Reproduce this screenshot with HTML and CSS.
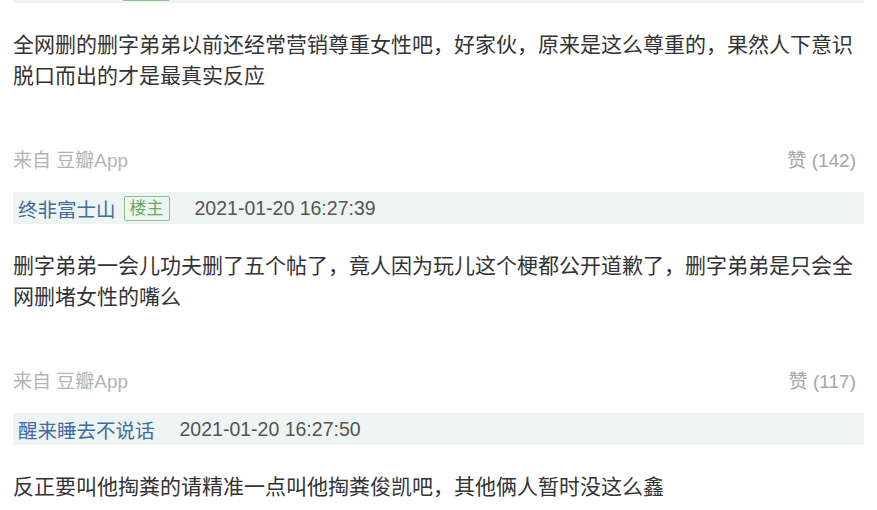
FILE: index.html
```html
<!DOCTYPE html>
<html lang="zh-CN">
<head>
    <meta charset="UTF-8">
    <meta name="viewport" content="width=device-width, initial-scale=1.0">
    <title>豆瓣回复</title>
    <link rel="stylesheet" href="styles.css">
</head>
<body>

    <div class="reply-list">
        <!-- cola del encabezado anterior, cortado por arriba -->
        <div class="reply-head reply-head-cut">
            <span class="tag-edge"></span>
        </div>
        <p class="reply-content">全网删的删字弟弟以前还经常营销尊重女性吧，好家伙，原来是这么尊重的，果然人下意识脱口而出的才是最真实反应</p>
        <div class="reply-foot">
            <span class="source">来自 豆瓣App</span>
            <span class="likes">赞 (142)</span>
        </div>

        <div class="reply-head">
            <span class="author">终非富士山</span>
            <span class="op-tag">楼主</span>
            <span class="pubtime">2021-01-20 16:27:39</span>
        </div>
        <p class="reply-content">删字弟弟一会儿功夫删了五个帖了，竟人因为玩儿这个梗都公开道歉了，删字弟弟是只会全网删堵女性的嘴么</p>
        <div class="reply-foot">
            <span class="source">来自 豆瓣App</span>
            <span class="likes">赞 (117)</span>
        </div>

        <div class="reply-head">
            <span class="author">醒来睡去不说话</span>
            <span class="pubtime">2021-01-20 16:27:50</span>
        </div>
        <p class="reply-content">反正要叫他掏粪的请精准一点叫他掏粪俊凯吧，其他俩人暂时没这么鑫</p>
    </div>

</body>
</html>
```

FILE: styles.css
```css
body {
    margin: 0;
    background-color: #ffffff;
    color: #333;
    font-family: "Liberation Sans", "Noto Sans CJK SC", sans-serif;
    overflow: hidden;
}
.reply-list {
    padding: 0 13px;
}
.reply-head {
    display: flex;
    align-items: center;
    height: 32px;
    padding: 0 5px;
    margin-top: 19px;
    background-color: #eef4f1; /* verde grisaceo */
}
.reply-head-cut {
    margin-top: -29px;
    align-items: flex-start;
}
.tag-edge {
    margin-left: 104px;
    margin-top: 6px;
    width: 46px;
    height: 22px;
    border: 1px solid #8cc08c;
    border-radius: 2px;
}
.author {
    font-size: 19.5px;
    color: #3f6b9e; /* azul */
}
.op-tag {
    margin-left: 8px;
    height: 23px;
    line-height: 23px;
    padding: 0 5px;
    border: 1px solid #8cc08c;
    border-radius: 2px;
    font-size: 17px;
    color: #66a866;
}
.pubtime {
    margin-left: 25px;
    font-size: 19.5px;
    color: #555;
}
.reply-content {
    margin: 26px 0 0;
    font-size: 21px;
    line-height: 31px;
    color: #333;
}
.reply-foot {
    display: flex;
    justify-content: space-between;
    margin-top: 58px;
    padding-right: 8px;
    height: 24px;
    line-height: 24px;
    font-size: 19px;
}
.source {
    color: #b3b3b3;
}
.likes {
    color: #a6a6a6;
}
```
